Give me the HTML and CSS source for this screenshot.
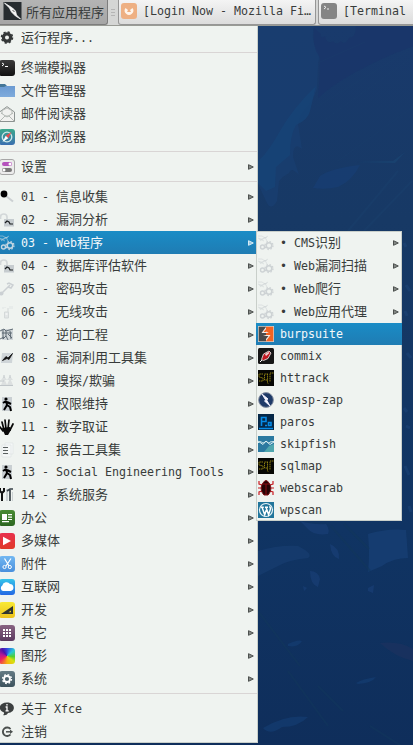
FILE: index.html
```
<!DOCTYPE html>
<html lang="zh-CN">
<head>
<meta charset="utf-8">
<title>Xfce</title>
<link rel="stylesheet" href="styles.css">
</head>
<body>
<svg class="defs" width="0" height="0">
<defs>
<linearGradient id="g-blk" x2="0" y2="1"><stop stop-color="#3a3a3a"/><stop offset="1" stop-color="#111"/></linearGradient>
<linearGradient id="g-fold" x2="0" y2="1"><stop stop-color="#6b9bd2"/><stop offset="1" stop-color="#7fabdc"/></linearGradient>
<linearGradient id="g-web" x2="0" y2="1"><stop stop-color="#3aa88c"/><stop offset="1" stop-color="#3b6fb0"/></linearGradient>
<linearGradient id="g-grn" x2="0" y2="1"><stop stop-color="#4a8c35"/><stop offset="1" stop-color="#2c6620"/></linearGradient>
<linearGradient id="g-red" x2="0" y2="1"><stop stop-color="#e8304c"/><stop offset="1" stop-color="#e03a2a"/></linearGradient>
<linearGradient id="g-acc" x2="0" y2="1"><stop stop-color="#72b8f2"/><stop offset="1" stop-color="#4a90dc"/></linearGradient>
<linearGradient id="g-net" x2="0" y2="1"><stop stop-color="#35c4ea"/><stop offset="1" stop-color="#2468e4"/></linearGradient>
<linearGradient id="g-yel" x2="0" y2="1"><stop stop-color="#f8ea35"/><stop offset="1" stop-color="#edc11c"/></linearGradient>
<linearGradient id="g-pur" x2="0" y2="1"><stop stop-color="#886482"/><stop offset="1" stop-color="#5c3a60"/></linearGradient>
<linearGradient id="g-sys" x2="0" y2="1"><stop stop-color="#647b84"/><stop offset="1" stop-color="#3c525c"/></linearGradient>
<symbol id="gear" viewBox="0 0 16 16"><circle cx="8" cy="7.500" r="3.600" fill="none" stroke="currentColor" stroke-width="3.200"/><circle cx="8" cy="7.500" r="5.500" fill="none" stroke="currentColor" stroke-width="1.500" stroke-dasharray="2.200 2.120"/></symbol>
<symbol id="term" viewBox="0 0 16 16"><rect width="16" height="16" rx="3" fill="url(#g-blk)"/><path d="M3 3l2 1.300L3 6M6 6.500h3" stroke="#fff" fill="none"/></symbol>
<symbol id="folder" viewBox="0 0 16 16"><path d="M0 1h6l2 2h7v4H0z" fill="#447697"/><path d="M0 4h5l2-1h9v11H0z" fill="url(#g-fold)"/></symbol>
<symbol id="mail" viewBox="0 0 16 16"><path d="M.5 6L8 .6 15.500 6v9.500H.5z" fill="#f1f1ef" stroke="#8c9290"/><path d="M3 8V4.500L8 2l5 2.500V8M1 15l5-5h4l5 5M2 7l6 4 6-4" fill="none" stroke="#b4b9b5"/></symbol>
<symbol id="browser" viewBox="0 0 16 16"><rect width="16" height="16" rx="3" fill="url(#g-web)"/><circle cx="8" cy="8" r="4.800" fill="none" stroke="#cfe9e9" stroke-width="1.300"/><path d="M12.500 3L9.300 9.300 6.700 6.700z" fill="#e84d4d"/><path d="M3.500 13L9.300 9.300 6.700 6.700z" fill="#fff"/></symbol>
<symbol id="settings" viewBox="0 0 16 16"><rect x=".5" y=".5" width="15" height="15" rx="2.500" fill="#ececec" stroke="#a7a7a7"/><rect x="3" y="3" width="10" height="4" rx="2" fill="#b552bd"/><circle cx="11" cy="5" r="1.500" fill="#fff"/><rect x="3" y="9" width="10" height="4" rx="2" fill="#777"/><circle cx="5" cy="11" r="1.500" fill="#fff"/></symbol>
<symbol id="search" viewBox="0 0 16 16"><path d="M7 7l7 5.500" stroke="#ccd0d2" stroke-width="2"/><circle cx="5" cy="5" r="3.400" fill="#000"/></symbol>
<symbol id="lock" viewBox="0 0 16 16"><path d="M1.500 7V5C1.500 1 8 1 8 5v3" fill="none" stroke="#d3d8d9" stroke-width="1.700"/><rect x="5" y="7" width="10" height="7.500" fill="#c6cccf"/><path d="M6 11l2-2 2 1 1 2 3 0" fill="none" stroke="#181c1e" stroke-width="1.200"/></symbol>
<symbol id="web" viewBox="0 0 16 16"><g stroke="currentColor" fill="none"><path d="M0 1h4l3 2 3-2M1 4h4l4-2M2 6l5-4 2 4M0 3l6 3" stroke-width=".9" opacity=".6"/><circle cx="4.500" cy="12" r="2" stroke-width="1.400"/><circle cx="11" cy="10.500" r="2.800" stroke-width="1.600"/><circle cx="11" cy="10.500" r="4" stroke-width="1.300" stroke-dasharray="1.500 1.640"/></g></symbol>
<symbol id="key" viewBox="0 0 16 16"><path d="M2 13l9-9M8 3l2-1 4 2-2 3-3-1" fill="none" stroke="#cbd0d3" stroke-width="1.500"/><circle cx="2.500" cy="12.500" r="2" fill="#cbd0d3"/></symbol>
<symbol id="radio" viewBox="0 0 16 16"><path d="M5.500 8h4v6h-4zM9 4v4" fill="#e2e6e6" stroke="#d4d9d9"/><path d="M4 3v2M6 3v1M11 2v3M13 2v3" stroke="#dfe4e4"/><path d="M6.500 10h2" stroke="#fff"/></symbol>
<symbol id="rev" viewBox="0 0 16 16"><path d="M2 2h12v11H3z" fill="#d0d6d9"/><path d="M1 4l4-2 2 2 7-2M3 6h10M4 3v9l3-3 2 4M11 4l1 8M1 12l4-2M9 7l4 4M7 4v5" fill="none" stroke="#54606a" stroke-width=".9"/></symbol>
<symbol id="exploit" viewBox="0 0 16 16"><path d="M3 3h11l-1 10H2z" fill="#cfd5d8"/><path d="M3.500 10.500L7 6.500 9 8l4.500-4.500L10 9.500 8 8.500z" fill="#111" stroke="#111" stroke-width=".8"/></symbol>
<symbol id="sniff" viewBox="0 0 16 16"><path d="M2 12l3-7 3 7zM8 12l3-7 3 7zM2 7l3-4 3 4zM8 7l3-4 3 4z" fill="#dce0e0"/><path d="M1 12.500h13M1 8h4M5 2v3M11 2v3" stroke="#c0c6c9" fill="none"/></symbol>
<symbol id="run" viewBox="0 0 16 16"><rect x="3" y="1" width="10" height="14" fill="#c9cfd2"/><circle cx="7" cy="3" r="1.600" fill="#000"/><path d="M7 5l1 4-3 5M7 5L4 7M8 6l4 2M8 9l3 2 1 4" fill="none" stroke="#000" stroke-width="2"/></symbol>
<symbol id="hand" viewBox="0 0 16 16"><path d="M4 12L1 8M5 11L3 3M7 10L6 1M9 10l1-9M11 11l3-6" fill="none" stroke="#090909" stroke-width="1.700" stroke-linecap="round"/><path d="M3 9l8-1 1 3-3 5H6z" fill="#090909"/></symbol>
<symbol id="report" viewBox="0 0 16 16"><path d="M6 1h8v11H6zM3 3h9v12H3z" fill="#f5f8f7" stroke="#dfe4e4" stroke-width=".7"/><path d="M4 5.500h5M4 8.500h5M4 11.500h5" stroke="#59605f"/></symbol>
<symbol id="tools" viewBox="0 0 16 16"><path d="M6 2h1v12h2V2zM13 5v9h1V5z" fill="#cbd1d3"/><path d="M1 1v3l2 2 2-2V1M3 5v9" fill="none" stroke="#111" stroke-width="2"/><path d="M8 4l3-2h3M11 3v11" fill="none" stroke="#394248" stroke-width="1.700"/></symbol>
<symbol id="office" viewBox="0 0 16 16"><rect width="16" height="16" rx="3" fill="url(#g-grn)"/><path d="M3 4h5v6H3zM9 4h4v1.300H9zM9 6.500h4v1.300H9zM9 9h4v1H9zM3 11h7v1.200H3z" fill="#fff"/></symbol>
<symbol id="media" viewBox="0 0 16 16"><rect width="16" height="16" rx="3" fill="url(#g-red)"/><path d="M4 3.800l8 4.200-8 4.200z" fill="#fff"/></symbol>
<symbol id="acc" viewBox="0 0 16 16"><rect width="16" height="16" rx="3" fill="url(#g-acc)"/><path d="M5.500 2.500L10 10M12 2.500L7 10" stroke="#fff" stroke-width="1.200"/><circle cx="5.500" cy="11" r="1.600" fill="none" stroke="#fff"/><circle cx="10.800" cy="11" r="1.600" fill="none" stroke="#fff"/></symbol>
<symbol id="net" viewBox="0 0 16 16"><rect width="16" height="16" rx="3" fill="url(#g-net)"/><path d="M4 12a3 3 0 0 1-.7-5.500A4.300 4.300 0 0 1 11 5a3.600 3.600 0 0 1 1 7z" fill="#fff"/></symbol>
<symbol id="dev" viewBox="0 0 16 16"><rect width="16" height="16" rx="3" fill="url(#g-yel)"/><path d="M2 12L14 4v8z" fill="#303530"/><path d="M9.500 10.300L12 8.500v1.800z" fill="#f2d52a"/></symbol>
<symbol id="other" viewBox="0 0 16 16"><rect width="16" height="16" rx="3" fill="url(#g-pur)"/><path d="M4 5h8M4 8h8M4 11h8" stroke="#fff" stroke-width="2" stroke-dasharray="2 1"/></symbol>
<symbol id="sys" viewBox="0 0 16 16"><rect width="16" height="16" rx="3" fill="url(#g-sys)"/><circle cx="8" cy="8" r="3" fill="none" stroke="#fff" stroke-width="1.800"/><circle cx="8" cy="8" r="4.400" fill="none" stroke="#fff" stroke-width="1.500" stroke-dasharray="1.700 1.756"/></symbol>
<symbol id="about" viewBox="0 0 16 16"><path d="M8 1.500c9 0 9 10 1 10.500-1 2-3 2.500-5 2 1-.6 1.200-1.500 1-2.500C-1.500 9.500-.5 1.500 8 1.500z" fill="#3c4040"/><path d="M8 3v1.500M6.600 6H8v3.600M6.500 9.800h3.200" stroke="#fff" stroke-width="1.300" fill="none"/></symbol>
<symbol id="logout" viewBox="0 0 16 16"><path d="M11.500 5A4.300 4.300 0 1 0 11.500 10.500" fill="none" stroke="#4b504e" stroke-width="1.900"/><path d="M7 7.800h5" stroke="#4b504e" stroke-width="1.500"/><path d="M11 5.500l3 2.300-3 2.300z" fill="#4b504e"/></symbol>
<symbol id="burp" viewBox="0 0 16 16"><path d="M0 0h16v16H0z" fill="#d9d4d0"/><path d="M.7.700h7.300v14.600H.7z" fill="#4b4b4b"/><path d="M8 .7h7.300v14.600H8z" fill="#f26322"/><path d="M8 1L3.500 7H8v2H5l3 1v5l4.500-6H8V7h3L8 5.500z" fill="#f4eee8"/><path d="M8 3v3H5.500z" fill="#f26322"/><path d="M8 10v3l2.500-3z" fill="#4b4b4b"/></symbol>
<symbol id="commix" viewBox="0 0 16 16"><rect width="16" height="16" rx="1.500" fill="#161616"/><path d="M3.500 11.500l2-5.500 5.500-3 2 2-3 5.500-4.500 2z" fill="#c21822" stroke="#ddd" stroke-width=".9"/><path d="M7 6l3.500-2 1 1L8 8z" fill="#f3d5d5"/><path d="M2 14l2-2" stroke="#fff"/></symbol>
<symbol id="sql" viewBox="0 0 16 16"><path d="M0 0h16v16H0z" fill="#070704"/><path d="M5 4H1v3l4 1v3H1M10 4H6.500v6H10M9.500 4v9l1 1M15.500 3H12v9" fill="none" stroke="#8d7f12" stroke-dasharray="1.500 .6"/></symbol>
<symbol id="zap" viewBox="0 0 16 16"><circle cx="8" cy="8" r="7.400" fill="#1e3a68" stroke="#8a93a4"/><path d="M4 2l6 5-1.500.8L12 14 6.500 9l1.200-1z" fill="#fff" stroke="#eef"/></symbol>
<symbol id="paros" viewBox="0 0 16 16"><path d="M0 0h16v16H0z" fill="#052747"/><path d="M3.500 12V3.500H8v4H4M7 11.500h2M10.500 8.500H13v3h-2.500zM1 14.500h14" fill="none" stroke="#078ce8" stroke-width="1.600"/></symbol>
<symbol id="skip" viewBox="0 0 16 16"><path d="M0 0h16v16H0z" fill="#2b79a0"/><path d="M6 16l5-6 5-2v8z" fill="#4fa6ae"/><path d="M0 7c3-4 4 2 7-1 2-2 3 3 5 0l4-.5M0 5l5 3.500 3-3.500 4 3.500 4-2.500" fill="none" stroke="#d7edf0"/></symbol>
<symbol id="bug" viewBox="0 0 16 16"><path d="M4 5L1 4V1M12 5l3-1V1M4 8H0M12 8h4M4 11l-3 1v3M12 11l3 1v3" fill="none" stroke="#c81a20" stroke-width="1.200"/><path d="M5 3q3-5 6 0c3 4 2 9-1 12H6C3 12 2 7 5 3z" fill="#260406" stroke="#7d0c12"/><path d="M5 4h6M8 4v11" stroke="#8d0d14"/></symbol>
<symbol id="wp" viewBox="0 0 16 16"><path d="M0 0h16v16H0z" fill="#21759b"/><circle cx="8" cy="8" r="6.500" fill="none" stroke="#e8f2f6" stroke-width="1.200"/><path d="M2.800 5.200h3M7 5.200h3M4 5.200l2.700 7.500L8.300 8M8 5.200l2.600 7.500L12.500 7q0-2-1.200-2.500" fill="none" stroke="#fff" stroke-width="1.500"/></symbol>
<symbol id="kali" viewBox="0 0 18 18"><path d="M0 0h18v18H0z" fill="#272c30"/><path d="M1 1l8 5 3 3 1 4 4 4-5-3-4-4-2-4z" fill="#f5f5f5" stroke="#f5f5f5" stroke-width=".8"/><path d="M9 8l2 2" stroke="#555"/></symbol>
<symbol id="arrow" viewBox="0 0 6 6"><path d="M.5.7L5.300 3 .5 5.300z" fill="currentColor" fill-opacity=".65" stroke="currentColor"/></symbol>
</defs>
</svg>
<div class="desktop">
<header class="panel">
<div class="apps"><svg class="logo"><use href="#kali"/></svg><span>所有应用程序</span></div>
<div class="grip"><i></i><i></i><i></i></div>
<div class="task first"><svg class="ic" viewBox="0 0 16 16"><rect width="16" height="16" rx="3" fill="#eeb083"/><path d="M4.500 5a4.300 4.300 0 1 0 7 0L9 7l1 2H6l1-2z" fill="#fff5ec"/></svg><span class="m">[Login Now - Mozilla Fi…</span></div>
<div class="task second"><svg class="ic" viewBox="0 0 16 16"><rect width="16" height="16" rx="3" fill="#858585"/><path d="M3 3l2 1.300L3 6M6 6h2" fill="none" stroke="#eee"/></svg><span class="m">[Terminal</span></div>
</header>
<main class="stage">
<svg class="wall" viewBox="0 0 155 719" preserveAspectRatio="none">
<defs><linearGradient id="sky" x2="0" y2="1"><stop stop-color="#193a6c"/><stop offset=".27" stop-color="#173965"/><stop offset=".7" stop-color="#103463"/><stop offset="1" stop-color="#0f2e5b"/></linearGradient></defs>
<path d="M0 0h156v719H0z" fill="url(#sky)"/>
<path d="M0 0h56q-3 12 1 20 6 8 3 18l-1 25q-4 12-12 20-5 5-7 15l4 25q-9-8-9 8l6 18q-8-9-10-2-6 3-10 8l-2 20q-6 10-10 2L0 158z" fill="#193e71" opacity=".8"/>
<path d="M58 60Q35 82 22 105T0 135v22l8 8 9-4 1-20 14-12q0-20 6-30 12-5 14-14z" fill="#174377" opacity=".8"/>
<path d="M56 2q-2 20 6 30 0 20-2 40Q90 45 155 20V0h-57q0 12-7 12-4 8-8 3-5 5-8 0-6 4-8-5-4 4-5-3z" fill="#19346a" opacity=".7"/>
<path d="M62 36l45-20M60 80l90-55M65 95L156 30M80 135L156 80" stroke="#1c416d" opacity=".3"/>
<path d="M62 150q12-8 40-11-8 16-22 22-12 3-25 1z" fill="#183f76" opacity=".6"/>
<path d="M98 136l37-1 12-9-10 11z" fill="#1b4875" opacity=".6"/>
<path d="M90 205L140 145M106 205L154 155" stroke="#1c4673" opacity=".25" stroke-width="2"/>
<path d="M0 525q20-6 40-5 16 8 10 12-20 2-30 8l-20 10z" fill="#194074" opacity=".55"/>
<path d="M110 508q20-6 38-4l2 28q-15 0-26 8l-14 6q2-18 0-38z" fill="#194379" opacity=".6"/>
<path d="M42 495q14 4 26 3 4 6 2 10-14 2-20-5zM52 545q8 0 10 8l-2 8q-8-3-8-16zM72 518q10 4 9 15-8-2-9-15zM45 560l4 2-3 3zM110 562l6-3-1 8-5-2z" fill="#1c427b" opacity=".55"/>
<path d="M73 500l39 45M86 498l25 25M0 585l42 55M30 645l40 55M60 660l25 25M112 700l44 28" stroke="#12375c" opacity=".5" stroke-width="2"/>
<path d="M98 657q6-4 20-6-4 6-18 7zM5 702q23-14 45-11-10 10-26 10-12 9-19 1zM30 618q10-5 14-3-4 7-14 5z" fill="#16427a" opacity=".5"/>
<path d="M122 617q20-2 33 6v12q-18-4-33-18z" fill="#23335f" opacity=".45"/>
<path d="M146 217l2 4M148 259l4 6M147 285l2 5M149 327l4 5M146 382l3 4M147 440l4 9M151 480l2 6M148 400l4 2" fill="none" stroke="#235088" stroke-width="3" opacity=".3"/>
</svg>
<nav class="menu">
<div class="row"><svg class="ic dark"><use href="#gear"/></svg><span>运行程序<b class="m">...</b></span></div>
<hr>
<div class="row"><svg class="ic"><use href="#term"/></svg><span class="zh">终端模拟器</span></div>
<div class="row"><svg class="ic"><use href="#folder"/></svg><span class="zh">文件管理器</span></div>
<div class="row"><svg class="ic"><use href="#mail"/></svg><span class="zh">邮件阅读器</span></div>
<div class="row"><svg class="ic"><use href="#browser"/></svg><span class="zh">网络浏览器</span></div>
<hr>
<div class="row"><svg class="ic"><use href="#settings"/></svg><span class="zh">设置</span><svg class="ar"><use href="#arrow"/></svg></div>
<hr>
<div class="row"><svg class="ic"><use href="#search"/></svg><span><b class="m">01 - </b>信息收集</span><svg class="ar"><use href="#arrow"/></svg></div>
<div class="row"><svg class="ic"><use href="#lock"/></svg><span><b class="m">02 - </b>漏洞分析</span><svg class="ar"><use href="#arrow"/></svg></div>
<div class="row on"><svg class="ic lite"><use href="#web"/></svg><span><b class="m">03 - Web</b>程序</span><svg class="ar"><use href="#arrow"/></svg></div>
<div class="row"><svg class="ic"><use href="#lock"/></svg><span><b class="m">04 - </b>数据库评估软件</span><svg class="ar"><use href="#arrow"/></svg></div>
<div class="row"><svg class="ic"><use href="#key"/></svg><span><b class="m">05 - </b>密码攻击</span><svg class="ar"><use href="#arrow"/></svg></div>
<div class="row"><svg class="ic"><use href="#radio"/></svg><span><b class="m">06 - </b>无线攻击</span><svg class="ar"><use href="#arrow"/></svg></div>
<div class="row"><svg class="ic"><use href="#rev"/></svg><span><b class="m">07 - </b>逆向工程</span><svg class="ar"><use href="#arrow"/></svg></div>
<div class="row"><svg class="ic"><use href="#exploit"/></svg><span><b class="m">08 - </b>漏洞利用工具集</span><svg class="ar"><use href="#arrow"/></svg></div>
<div class="row"><svg class="ic"><use href="#sniff"/></svg><span><b class="m">09 - </b>嗅探<b class="m">/</b>欺骗</span><svg class="ar"><use href="#arrow"/></svg></div>
<div class="row"><svg class="ic"><use href="#run"/></svg><span><b class="m">10 - </b>权限维持</span><svg class="ar"><use href="#arrow"/></svg></div>
<div class="row"><svg class="ic"><use href="#hand"/></svg><span><b class="m">11 - </b>数字取证</span><svg class="ar"><use href="#arrow"/></svg></div>
<div class="row"><svg class="ic"><use href="#report"/></svg><span><b class="m">12 - </b>报告工具集</span><svg class="ar"><use href="#arrow"/></svg></div>
<div class="row short"><svg class="ic"><use href="#run"/></svg><span class="m">13 - Social Engineering Tools</span><svg class="ar"><use href="#arrow"/></svg></div>
<div class="row"><svg class="ic"><use href="#tools"/></svg><span><b class="m">14 - </b>系统服务</span><svg class="ar"><use href="#arrow"/></svg></div>
<div class="row"><svg class="ic"><use href="#office"/></svg><span class="zh">办公</span><svg class="ar"><use href="#arrow"/></svg></div>
<div class="row"><svg class="ic"><use href="#media"/></svg><span class="zh">多媒体</span><svg class="ar"><use href="#arrow"/></svg></div>
<div class="row"><svg class="ic"><use href="#acc"/></svg><span class="zh">附件</span><svg class="ar"><use href="#arrow"/></svg></div>
<div class="row"><svg class="ic"><use href="#net"/></svg><span class="zh">互联网</span><svg class="ar"><use href="#arrow"/></svg></div>
<div class="row"><svg class="ic"><use href="#dev"/></svg><span class="zh">开发</span><svg class="ar"><use href="#arrow"/></svg></div>
<div class="row"><svg class="ic"><use href="#other"/></svg><span class="zh">其它</span><svg class="ar"><use href="#arrow"/></svg></div>
<div class="row"><i class="ic rainbow"></i><span class="zh">图形</span><svg class="ar"><use href="#arrow"/></svg></div>
<div class="row"><svg class="ic"><use href="#sys"/></svg><span class="zh">系统</span><svg class="ar"><use href="#arrow"/></svg></div>
<hr>
<div class="row"><svg class="ic"><use href="#about"/></svg><span>关于<b class="m"> Xfce</b></span></div>
<div class="row"><svg class="ic"><use href="#logout"/></svg><span class="zh">注销</span></div>
</nav>
<nav class="submenu">
<div class="row"><svg class="ic pale"><use href="#web"/></svg><span><b class="m">• CMS</b>识别</span><svg class="ar"><use href="#arrow"/></svg></div>
<div class="row"><svg class="ic pale"><use href="#web"/></svg><span><b class="m">• Web</b>漏洞扫描</span><svg class="ar"><use href="#arrow"/></svg></div>
<div class="row"><svg class="ic pale"><use href="#web"/></svg><span><b class="m">• Web</b>爬行</span><svg class="ar"><use href="#arrow"/></svg></div>
<div class="row"><svg class="ic pale"><use href="#web"/></svg><span><b class="m">• Web</b>应用代理</span><svg class="ar"><use href="#arrow"/></svg></div>
<div class="row short on"><svg class="ic"><use href="#burp"/></svg><span class="m">burpsuite</span></div>
<div class="row short"><svg class="ic"><use href="#commix"/></svg><span class="m">commix</span></div>
<div class="row short"><svg class="ic"><use href="#sql"/></svg><span class="m">httrack</span></div>
<div class="row short"><svg class="ic"><use href="#zap"/></svg><span class="m">owasp-zap</span></div>
<div class="row short"><svg class="ic"><use href="#paros"/></svg><span class="m">paros</span></div>
<div class="row short"><svg class="ic"><use href="#skip"/></svg><span class="m">skipfish</span></div>
<div class="row short"><svg class="ic"><use href="#sql"/></svg><span class="m">sqlmap</span></div>
<div class="row short"><svg class="ic"><use href="#bug"/></svg><span class="m">webscarab</span></div>
<div class="row short"><svg class="ic"><use href="#wp"/></svg><span class="m">wpscan</span></div>
</nav>
</main>
</div>
</body>
</html>
```
FILE: styles.css
```
* { box-sizing: border-box; }
body { margin: 0; overflow: hidden; font: 13px "Noto Sans CJK SC", sans-serif; color: #383c3b; }
.defs { position: absolute; }
.desktop { width: 413px; height: 745px; overflow: hidden; display: flex; flex-direction: column; background: #0f2e5b; }
.m { font-family: "DejaVu Sans Mono", monospace; font-size: 11.63px; font-weight: 400; white-space: pre; }
.panel { height: 26px; flex: none; display: flex; overflow: hidden; background: #d5d6d5; border-bottom: 1px solid #999b95; }
.apps { width: 108px; flex: none; display: flex; align-items: center; gap: 4px; padding: 0 0 2px 3px; background: linear-gradient(#b4b4b4, #a6a6a6); border: solid #7d7d7d; border-width: 0 1px 1px 0; border-radius: 0 0 3px 0; white-space: nowrap; }
.logo { width: 19px; height: 18px; flex: none; }
.grip { width: 10px; flex: none; display: flex; flex-direction: column; justify-content: center; align-items: center; gap: 2px; }
.grip i { width: 4px; height: 1px; background: #b5b5b5; }
.task { height: 25px; display: flex; align-items: center; gap: 6px; padding: 0 0 2px 2px; background: linear-gradient(#f4f4f4, #dcdcdc); border: 1px solid #969696; border-top: 0; border-radius: 0 0 3px 3px; white-space: nowrap; flex: none; }
.first { width: 198px; }
.second { width: 110px; margin-left: 2px; }
.stage { position: relative; flex: 1; display: flex; min-height: 0; }
.wall { position: absolute; left: 258px; top: 0; width: 155px; height: 719px; }
.menu { width: 258px; height: 717px; flex: none; background: #eff3f0; border-right: 1px solid #c9cfca; border-bottom: 1px solid #c9cfca; }
.row { height: 23px; display: flex; align-items: center; gap: 6px; padding-right: 3px; line-height: 22px; white-space: nowrap; }
.row.short { height: 22px; }
.zh { padding-bottom: 1px; }
.ic { width: 16px; height: 16px; flex: none; display: block; }
.menu .ic { margin-left: -1px; }
.ar { width: 6px; height: 6px; margin-left: auto; color: #4c504e; flex: none; }
.on { background: linear-gradient(#1a8cc6, #1f7cb3); color: #f4f8fa; }
.on .ar { color: #d8ebf5; }
.dark { color: #343838; }
.lite { color: #c3d6e2; }
.pale { color: #cdd2d4; }
.rainbow { border-radius: 3px; background: conic-gradient(from 0deg, #3348e0, #28c8d8 50deg, #50cf30 95deg, #d8e010 130deg, #f7b010 180deg, #ee2260 240deg, #b01898 285deg, #4b12a8 325deg, #3348e0); }
hr { margin: 3px 0; height: 1px; border: 0; background: #d9d5d5; }
.submenu { position: absolute; left: 256px; top: 205px; width: 146px; height: 290px; background: #eff3f0; box-shadow: inset 0 0 0 1px #c9cfca; }
.submenu .row { padding-left: 2px; }
```
